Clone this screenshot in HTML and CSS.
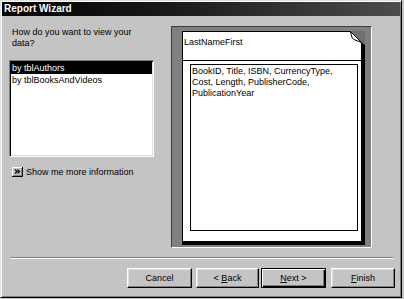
FILE: index.html
```html
<!DOCTYPE html>
<html>
<head>
<meta charset="utf-8">
<link rel="stylesheet" href="styles.css">
</head>
<body>
<div class="window">
  <div class="titlebar"><span class="title">Report Wizard</span></div>
  <div class="main">
    <div class="left">
      <p class="question">How do you want to view your<br>data?</p>
      <div class="listbox">
        <div class="item selected">by tblAuthors</div>
        <div class="item">by tblBooksAndVideos</div>
      </div>
      <div class="more">
        <svg class="more-icon" width="11" height="10" viewBox="0 0 11 10">
          <rect x="0" y="0" width="11" height="10" fill="#c4c4c4"/>
          <path d="M0.5,9.5 V0.5 H10.5" fill="none" stroke="#fff"/>
          <path d="M0,9.5 H10.5 V0" fill="none" stroke="#000"/>
          <path d="M1,8.5 H9.5 V1" fill="none" stroke="#808080"/>
          <path d="M3,2.5 L5,4.5 L3,6.5 M5.5,2.5 L7.5,4.5 L5.5,6.5" fill="none" stroke="#000" stroke-width="1.2"/>
        </svg>
        <span>Show me more information</span>
      </div>
    </div>
    <div class="frame">
      <div class="page">
        <div class="page-header">LastNameFirst</div>
        <div class="page-detail">BookID, Title, ISBN, CurrencyType,<br>Cost, Length, PublisherCode,<br>PublicationYear</div>
        <svg class="fold" width="15" height="15" viewBox="0 0 15 15">
          <polygon points="0,0 15,0 15,15" fill="#707070"/>
          <polygon points="11,11 15,14 15,15 11,15" fill="#000"/>
          <path d="M0.5,0.5 L11.5,11.5 L5,9 Q2,8 1.5,5 Z" fill="#fff" stroke="#000" stroke-width="1"/>
        </svg>
      </div>
    </div>
  </div>
  <div class="separator"></div>
  <div class="buttons">
    <div class="btn btn-cancel"><span>Cancel</span></div>
    <div class="btn btn-back"><span>&lt; <u>B</u>ack</span></div>
    <div class="btn btn-next"><span><u>N</u>ext &gt;</span></div>
    <div class="btn btn-finish"><span><u>F</u>inish</span></div>
  </div>
</div>
</body>
</html>
```
FILE: styles.css
```css
* { box-sizing: border-box; }

body {
  margin: 0;
  width: 404px;
  height: 299px;
  overflow: hidden;
  background: #c4c4c4;
  font-family: "Liberation Sans", Arial, sans-serif;
  font-size: 9px;
  color: #000;
}

.window {
  width: 402px;
  height: 298px;
  border: 1px solid;
  border-color: #dfdfdf #000 #000 #dfdfdf;
  box-shadow: inset 1px 1px #fff, inset -1px -1px #808080;
  padding: 1px;
  display: flex;
  flex-direction: column;
  background: #c4c4c4;
}

.titlebar {
  height: 14px;
  flex: none;
  background: linear-gradient(90deg, #000 0%, #1c1c1c 45%, #4c4c4c 100%);
  display: flex;
  align-items: center;
  padding-left: 2px;
}

.title {
  color: #fff;
  font-weight: bold;
  font-size: 10px;
  line-height: 14px;
}

.main {
  display: flex;
  align-items: flex-start;
  padding: 10px 0 0 7px;
  height: 232px;
  flex: none;
}

.left {
  width: 145px;
  margin-top: 1px;
  margin-right: 17px;
}

.question {
  margin: 0 0 0 3px;
  line-height: 11px;
  height: 22px;
}

.listbox {
  margin-top: 11px;
  height: 97px;
  background: #fff;
  border: 1px solid;
  border-color: #808080 #fff #fff #808080;
  box-shadow: inset 1px 1px #000, inset -1px -1px #dfdfdf;
  padding: 1px;
}

.item {
  line-height: 12px;
  padding-left: 1px;
  white-space: nowrap;
}

.selected {
  background: #000;
  color: #fff;
}

.more {
  display: flex;
  align-items: center;
  margin: 10px 0 0 3px;
  height: 10px;
  line-height: 10px;
  white-space: nowrap;
}

.more-icon {
  display: block;
  margin-right: 3px;
  flex: none;
}

.frame {
  width: 201px;
  height: 222px;
  flex: none;
  background: #808080;
  border: 1px solid;
  border-color: #404040 #fff #fff #404040;
  padding: 4px 6px 2px 10px;
}

.page {
  position: relative;
  height: 100%;
  background: #fff;
  border-style: solid;
  border-color: #000;
  border-width: 1px 4px 4px 1px;
  display: flex;
  flex-direction: column;
}

.page-header {
  height: 29px;
  flex: none;
  border-bottom: 1px solid #000;
  padding: 5px 0 0 1px;
  line-height: 11px;
}

.page-detail {
  flex: 1;
  margin: 3px 3px 10px 7px;
  border: 1px solid #000;
  padding: 1px 0 0 1px;
  line-height: 11px;
  white-space: nowrap;
}

.fold {
  position: absolute;
  top: -1px;
  right: -4px;
  display: block;
}

.separator {
  flex: none;
  margin: 9px 0 0 8px;
  width: 383px;
  height: 2px;
  border-top: 1px solid #808080;
  border-bottom: 1px solid #fff;
}

.buttons {
  flex: none;
  display: flex;
  margin-top: 9px;
  padding-left: 125px;
}

.btn {
  height: 20px;
  width: 65px;
  display: flex;
  align-items: center;
  justify-content: center;
  background: #c4c4c4;
  border: 1px solid;
  border-color: #fff #000 #000 #fff;
  box-shadow: inset -1px -1px #808080, inset 1px 1px #dfdfdf;
  line-height: 11px;
  white-space: pre;
}

.btn u { text-decoration: underline; }

.btn-cancel { width: 65px; margin-right: 4px; }
.btn-back { width: 63px; margin-right: 2px; }
.btn-next {
  width: 65px;
  margin-right: 5px;
  border-color: #000;
  box-shadow: inset 1px 1px #fff, inset -1px -1px #000, inset -2px -2px #808080;
}
.btn-finish { width: 64px; }
```
